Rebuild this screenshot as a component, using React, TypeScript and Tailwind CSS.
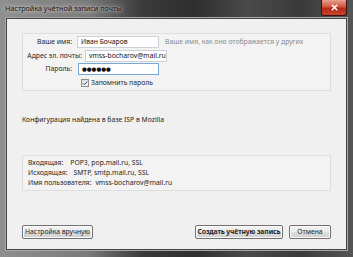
import { Check, X } from "lucide-react"

const font = "font-['Noto_Sans','DejaVu_Sans',sans-serif]"

function Btn({ children, bold }: { children: React.ReactNode; bold?: boolean }) {
  return (
    <button
      className={`h-[14px] w-full whitespace-nowrap rounded-[2px] border border-[#707070] bg-[linear-gradient(#f2f2f2,#ebebeb_50%,#dddddd_51%,#cfcfcf)] text-[6.8px] leading-none text-[#1e1e1e] shadow-[inset_0_0_0_1px_#fcfcfc] ${
        bold ? "font-bold tracking-[-0.1px]" : ""
      }`}
    >
      {children}
    </button>
  )
}

function Field({ value, focus, w = "w-[82px]", dots }: { value: string; focus?: boolean; w?: string; dots?: boolean }) {
  return (
    <div
      className={`flex h-[12px] items-center overflow-hidden whitespace-nowrap border bg-white px-[3px] text-[#111] ${
        dots ? "text-[5.5px]" : "text-[6.8px]"
      } ${w} ${focus ? "border-[#7aa7d6]" : "border-[#cdd2d9]"}`}
    >
      {value}
    </div>
  )
}

export default function App() {
  return (
    <div
      className={`${font} flex h-[257px] w-[353px] flex-col bg-[linear-gradient(90deg,#8f8f8f_0%,#7a7a7a_25%,#3b3b3b_40%,#2e2e2e_55%,#4a4a4a_70%,#3a3a3a_85%,#555_100%)]`}
    >
      {/* title bar */}
      <div className="flex h-[18px] shrink-0 items-start">
        <div className="pl-[5px] pt-[5px] text-[7.2px] leading-none text-[#111] [text-shadow:0_0_6px_#d8d8d8,0_0_3px_#e6e6e6]">
          Настройка учётной записи почты
        </div>
        <div className="ml-auto mr-[6px] flex h-[16px] w-[26px] items-center justify-center rounded-b-[3px] border border-t-0 border-[#3a1010] bg-[linear-gradient(#e8a091,#d0543c_45%,#b52a14_55%,#c8432b)]">
          <X className="h-[9px] w-[9px] text-white" strokeWidth={4} />
        </div>
      </div>

      {/* client area */}
      <div className="mx-[6px] mb-[7px] flex flex-1 flex-col border border-[#444] bg-[#f0f0f0] px-[15px] pt-[14px] shadow-[0_0_0_1px_#a9a9a9]">
        {/* account fields */}
        <div className="flex h-[58px] flex-col border border-[#dedede] bg-[#f3f3f3] pt-[2px] text-[6.8px] text-[#1e1e1e]">
          <div className="flex h-[13px] items-start">
            <div className="w-[49px] whitespace-nowrap pt-[3px] text-right leading-none">Ваше имя:</div>
            <div className="ml-[5px]">
              <Field value="Иван Бочаров" />
            </div>
            <div className="ml-[6px] whitespace-nowrap pt-[3px] leading-none text-[#8a8a8a]">
              Ваше имя, как оно отображается у других
            </div>
          </div>
          <div className="flex h-[13px] items-start pt-[1px]">
            <div className="w-[59px] whitespace-nowrap pt-[3px] text-right leading-none">Адрес эл. почты:</div>
            <div className="ml-[3px]">
              <Field value="vmss-bocharov@mail.ru" />
            </div>
          </div>
          <div className="flex h-[13px] items-start pt-[1px]">
            <div className="w-[49px] whitespace-nowrap pt-[3px] text-right leading-none">Пароль:</div>
            <div className="ml-[6px]">
              <Field value="●●●●●●" focus dots w="w-[81px]" />
            </div>
          </div>
          <div className="flex h-[13px] items-center pl-[58px] pt-[3px]">
            <div className="flex h-[8px] w-[8px] items-center justify-center border border-[#8e8f8f] bg-[linear-gradient(#dcdcdc,#f6f6f6)]">
              <Check className="h-[7px] w-[7px] text-[#2a4c8c]" strokeWidth={4} />
            </div>
            <span className="ml-[2px] leading-none">Запомнить пароль</span>
          </div>
        </div>

        <div className="mt-[26px] text-[6.8px] leading-none text-[#1e1e1e]">
          Конфигурация найдена в базе ISP в Mozilla
        </div>

        {/* server summary */}
        <div className="mt-[31px] flex h-[36px] flex-col border border-[#dedede] bg-[#f3f3f3] pl-[5px] pt-[3px] text-[6.8px] leading-none text-[#1e1e1e]">
          <div className="flex h-[10px] items-center gap-[7px]">
            <span>Входящая:</span>
            <span>POP3, pop.mail.ru, SSL</span>
          </div>
          <div className="flex h-[10px] items-center gap-[6px]">
            <span>Исходящая:</span>
            <span>SMTP, smtp.mail.ru, SSL</span>
          </div>
          <div className="flex h-[10px] items-center gap-[4px]">
            <span>Имя пользователя:</span>
            <span>vmss-bocharov@mail.ru</span>
          </div>
        </div>

        {/* buttons */}
        <div className="mt-[25px] flex items-center">
          <div className="w-[71px]">
            <Btn>Настройка вручную</Btn>
          </div>
          <div className="ml-auto flex gap-[6px]">
            <div className="w-[88px]">
              <Btn bold>Создать учётную запись</Btn>
            </div>
            <div className="w-[42px]">
              <Btn>Отмена</Btn>
            </div>
          </div>
        </div>
      </div>
    </div>
  )
}
